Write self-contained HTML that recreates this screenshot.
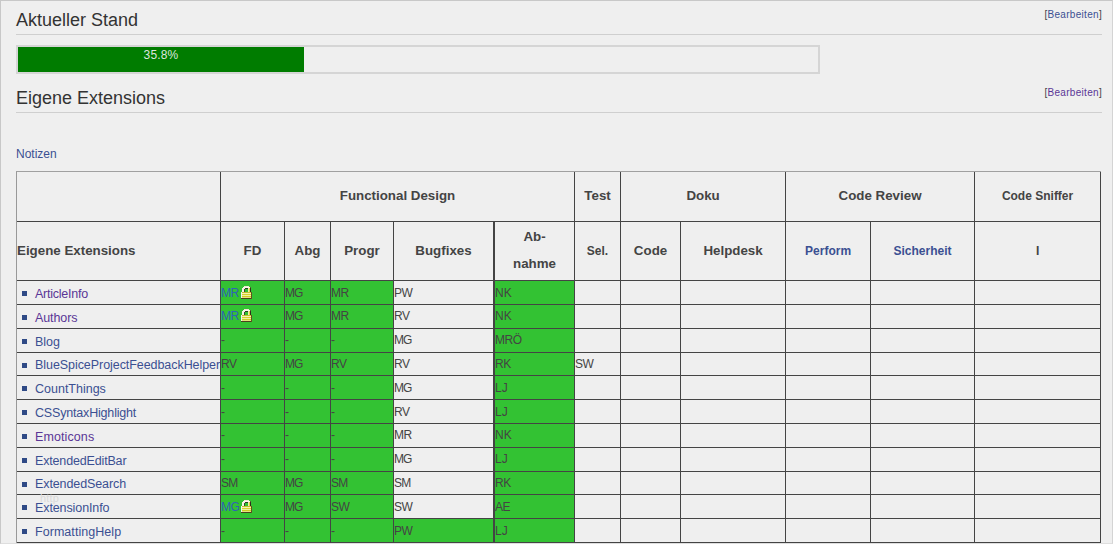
<!DOCTYPE html>
<html lang="de"><head><meta charset="utf-8"><title>Aktueller Stand</title>
<style>
html,body{margin:0;padding:0;}
body{width:1113px;height:544px;overflow:hidden;background:#efefef;font-family:"Liberation Sans",Arial,sans-serif;color:#444;position:relative;}
#frame{position:absolute;left:0;top:0;width:1111px;height:544px;border-left:1px solid #c8c8c8;border-right:1px solid #d4d4d4;border-top:1px solid #c8c8c8;border-bottom:1px solid #dedede;box-sizing:content-box;height:542px;}
a{text-decoration:none;color:#3b4f92;}
a.v{color:#5a3696;}
a.ext{color:#2f62b8;}
h2{position:absolute;left:16px;margin:0;font-weight:normal;font-size:18px;line-height:22px;color:#333;width:1086px;border-bottom:1px solid #cfcfcf;height:25px;}
h2 .es{position:absolute;right:0;top:-1px;font-size:10px;letter-spacing:0.3px;line-height:14px;color:#444;}
#h1{top:9px;}
#h2{top:87px;}
#prog{position:absolute;left:16px;top:45px;width:800px;height:25px;border:2px solid #d5d5d5;}
#prog div{width:286px;height:25px;background:#007c00;color:#dde4dd;font-size:12px;letter-spacing:0.15px;line-height:17px;text-align:center;}
#notizen{position:absolute;left:16px;top:146px;font-size:12px;line-height:16px;}
table{position:absolute;left:16px;top:171px;border-collapse:separate;border-spacing:0;table-layout:fixed;width:1085px;border-left:1px solid #999;border-top:1px solid #a0a0a0;font-size:12px;}
td,th{padding:0;border-right:1px solid #444;border-bottom:1px solid #444;box-sizing:border-box;overflow:hidden;white-space:nowrap;vertical-align:middle;text-align:left;font-weight:normal;}
th{font-weight:bold;font-size:13.33px;text-align:center;color:#444;padding-bottom:2px;}
tr.r2 th.s{padding-bottom:0;}
th.s{font-size:12px;}
th.l{text-align:left;}
th.ab{border-left:1px solid #444;line-height:27px;}
td.ab{border-left:1px solid #444;}
td.g{background:#33c233;}
td.n{font-size:12.5px;padding-top:2px;}
td.n span{display:inline-block;width:5px;height:5px;background:#2f4a86;margin:0 8px 1px 5px;vertical-align:middle;}
.lock{vertical-align:-2px;margin-left:2px;}
td{letter-spacing:-0.5px;}td.n{letter-spacing:0;}
tr.up td{padding-bottom:2px;}tr.up td.n{padding-bottom:0;}
#ghost{position:absolute;left:40px;top:492px;font-size:11px;line-height:13px;color:#dadada;letter-spacing:0.2px;}
</style></head><body><div id="frame"></div>
<h2 id="h1">Aktueller Stand<span class="es">[<a href="#">Bearbeiten</a>]</span></h2>
<div id="prog"><div>35.8%</div></div>
<h2 id="h2">Eigene Extensions<span class="es">[<a class="v" href="#">Bearbeiten</a>]</span></h2>
<div id="notizen"><a href="#">Notizen</a></div>
<table><colgroup>
<col style="width:204px">
<col style="width:64px">
<col style="width:46px">
<col style="width:63px">
<col style="width:100px">
<col style="width:81px">
<col style="width:46px">
<col style="width:60px">
<col style="width:105px">
<col style="width:85px">
<col style="width:104px">
<col style="width:126px">
</colgroup>
<tr style="height:50px"><th></th><th colspan="5">Functional Design</th><th>Test</th><th colspan="2">Doku</th><th colspan="2">Code Review</th><th class="s">Code Sniffer</th></tr>
<tr class="r2" style="height:59px"><th class="l">Eigene Extensions</th><th>FD</th><th>Abg</th><th>Progr</th><th>Bugfixes</th><th class="ab">Ab-<br>nahme</th><th class="s">Sel.</th><th>Code</th><th>Helpdesk</th><th class="s"><a href="#">Perform</a></th><th class="s"><a href="#">Sicherheit</a></th><th class="s">I</th></tr>
<tr style="height:24px"><td class="n"><span></span><a href="#" class=v style="letter-spacing:-0.24px">ArticleInfo</a></td><td class="g"><a class="ext" href="#">MR</a><svg class="lock" width="11" height="13" viewBox="0 0 11 13" shape-rendering="crispEdges"><rect x="3" y="0" width="5" height="1" fill="#efe8d2"/><rect x="2" y="1" width="7" height="1" fill="#faf6ea"/><rect x="9" y="1" width="1" height="1" fill="#5a5a34"/><rect x="1" y="2" width="3" height="1" fill="#f6f0e0"/><rect x="4" y="2" width="3" height="1" fill="#2c3a24"/><rect x="7" y="2" width="1" height="1" fill="#f0ecb0"/><rect x="8" y="2" width="1" height="1" fill="#e4dc48"/><rect x="9" y="2" width="1" height="1" fill="#34341c"/><rect x="1" y="3" width="2" height="1" fill="#f8f2e6"/><rect x="3" y="3" width="1" height="1" fill="#3a4428"/><rect x="7" y="3" width="1" height="1" fill="#f0ecb0"/><rect x="8" y="3" width="1" height="1" fill="#e0d840"/><rect x="9" y="3" width="1" height="1" fill="#2e2e1a"/><rect x="1" y="4" width="2" height="1" fill="#f8f2e6"/><rect x="3" y="4" width="1" height="1" fill="#3a4428"/><rect x="7" y="4" width="1" height="1" fill="#f0ecb0"/><rect x="8" y="4" width="1" height="1" fill="#e0d840"/><rect x="9" y="4" width="1" height="1" fill="#2e2e1a"/><rect x="1" y="5" width="2" height="1" fill="#f8f2e6"/><rect x="3" y="5" width="1" height="1" fill="#3a4428"/><rect x="7" y="5" width="1" height="1" fill="#f0ecb0"/><rect x="8" y="5" width="1" height="1" fill="#e0d840"/><rect x="9" y="5" width="1" height="1" fill="#2e2e1a"/><rect x="0" y="6" width="1" height="6" fill="#f4eef0"/><rect x="10" y="6" width="1" height="7" fill="#5c5420"/><rect x="1" y="6" width="9" height="1" fill="#c4bc30"/><rect x="1" y="7" width="9" height="1" fill="#f4f4ac"/><rect x="1" y="8" width="9" height="1" fill="#d6d22c"/><rect x="1" y="9" width="9" height="1" fill="#f0f0a0"/><rect x="1" y="10" width="9" height="1" fill="#d0cc24"/><rect x="1" y="11" width="9" height="1" fill="#e6e47c"/><rect x="0" y="12" width="10" height="1" fill="#4a421c"/></svg></td><td class="g" style="letter-spacing:-0.9px">MG</td><td class="g">MR</td><td>PW</td><td class="g ab" style="letter-spacing:0px">NK</td><td></td><td></td><td></td><td></td><td></td><td></td></tr>
<tr class="up" style="height:24px"><td class="n"><span></span><a href="#" class=v style="letter-spacing:-0.1px">Authors</a></td><td class="g"><a class="ext" href="#">MR</a><svg class="lock" width="11" height="13" viewBox="0 0 11 13" shape-rendering="crispEdges"><rect x="3" y="0" width="5" height="1" fill="#efe8d2"/><rect x="2" y="1" width="7" height="1" fill="#faf6ea"/><rect x="9" y="1" width="1" height="1" fill="#5a5a34"/><rect x="1" y="2" width="3" height="1" fill="#f6f0e0"/><rect x="4" y="2" width="3" height="1" fill="#2c3a24"/><rect x="7" y="2" width="1" height="1" fill="#f0ecb0"/><rect x="8" y="2" width="1" height="1" fill="#e4dc48"/><rect x="9" y="2" width="1" height="1" fill="#34341c"/><rect x="1" y="3" width="2" height="1" fill="#f8f2e6"/><rect x="3" y="3" width="1" height="1" fill="#3a4428"/><rect x="7" y="3" width="1" height="1" fill="#f0ecb0"/><rect x="8" y="3" width="1" height="1" fill="#e0d840"/><rect x="9" y="3" width="1" height="1" fill="#2e2e1a"/><rect x="1" y="4" width="2" height="1" fill="#f8f2e6"/><rect x="3" y="4" width="1" height="1" fill="#3a4428"/><rect x="7" y="4" width="1" height="1" fill="#f0ecb0"/><rect x="8" y="4" width="1" height="1" fill="#e0d840"/><rect x="9" y="4" width="1" height="1" fill="#2e2e1a"/><rect x="1" y="5" width="2" height="1" fill="#f8f2e6"/><rect x="3" y="5" width="1" height="1" fill="#3a4428"/><rect x="7" y="5" width="1" height="1" fill="#f0ecb0"/><rect x="8" y="5" width="1" height="1" fill="#e0d840"/><rect x="9" y="5" width="1" height="1" fill="#2e2e1a"/><rect x="0" y="6" width="1" height="6" fill="#f4eef0"/><rect x="10" y="6" width="1" height="7" fill="#5c5420"/><rect x="1" y="6" width="9" height="1" fill="#c4bc30"/><rect x="1" y="7" width="9" height="1" fill="#f4f4ac"/><rect x="1" y="8" width="9" height="1" fill="#d6d22c"/><rect x="1" y="9" width="9" height="1" fill="#f0f0a0"/><rect x="1" y="10" width="9" height="1" fill="#d0cc24"/><rect x="1" y="11" width="9" height="1" fill="#e6e47c"/><rect x="0" y="12" width="10" height="1" fill="#4a421c"/></svg></td><td class="g" style="letter-spacing:-0.9px">MG</td><td class="g">MR</td><td>RV</td><td class="g ab" style="letter-spacing:0px">NK</td><td></td><td></td><td></td><td></td><td></td><td></td></tr>
<tr class="up" style="height:24px"><td class="n"><span></span><a href="#">Blog</a></td><td class="g">-</td><td class="g">-</td><td class="g">-</td><td style="letter-spacing:-0.9px">MG</td><td class="g ab">MRÖ</td><td></td><td></td><td></td><td></td><td></td><td></td></tr>
<tr style="height:23px"><td class="n"><span></span><a href="#" style="letter-spacing:-0.06px">BlueSpiceProjectFeedbackHelper</a></td><td class="g">RV</td><td class="g" style="letter-spacing:-0.9px">MG</td><td class="g">RV</td><td>RV</td><td class="g ab">RK</td><td>SW</td><td></td><td></td><td></td><td></td><td></td></tr>
<tr style="height:24px"><td class="n"><span></span><a href="#">CountThings</a></td><td class="g">-</td><td class="g">-</td><td class="g">-</td><td style="letter-spacing:-0.9px">MG</td><td class="g ab" style="letter-spacing:0px">LJ</td><td></td><td></td><td></td><td></td><td></td><td></td></tr>
<tr style="height:24px"><td class="n"><span></span><a href="#" style="letter-spacing:-0.18px">CSSyntaxHighlight</a></td><td class="g">-</td><td class="g">-</td><td class="g">-</td><td>RV</td><td class="g ab" style="letter-spacing:0px">LJ</td><td></td><td></td><td></td><td></td><td></td><td></td></tr>
<tr class="up" style="height:24px"><td class="n"><span></span><a href="#" class=v style="letter-spacing:0.1px">Emoticons</a></td><td class="g">-</td><td class="g">-</td><td class="g">-</td><td>MR</td><td class="g ab" style="letter-spacing:0px">NK</td><td></td><td></td><td></td><td></td><td></td><td></td></tr>
<tr class="up" style="height:24px"><td class="n"><span></span><a href="#" style="letter-spacing:-0.16px">ExtendedEditBar</a></td><td class="g">-</td><td class="g">-</td><td class="g">-</td><td style="letter-spacing:-0.9px">MG</td><td class="g ab" style="letter-spacing:0px">LJ</td><td></td><td></td><td></td><td></td><td></td><td></td></tr>
<tr style="height:23px"><td class="n"><span></span><a href="#" style="letter-spacing:-0.1px">ExtendedSearch</a></td><td class="g" style="letter-spacing:-0.8px">SM</td><td class="g" style="letter-spacing:-0.9px">MG</td><td class="g" style="letter-spacing:-0.8px">SM</td><td style="letter-spacing:-0.8px">SM</td><td class="g ab">RK</td><td></td><td></td><td></td><td></td><td></td><td></td></tr>
<tr style="height:24px"><td class="n"><span></span><a href="#" style="letter-spacing:-0.1px">ExtensionInfo</a></td><td class="g"><a class="ext" href="#">MG</a><svg class="lock" width="11" height="13" viewBox="0 0 11 13" shape-rendering="crispEdges"><rect x="3" y="0" width="5" height="1" fill="#efe8d2"/><rect x="2" y="1" width="7" height="1" fill="#faf6ea"/><rect x="9" y="1" width="1" height="1" fill="#5a5a34"/><rect x="1" y="2" width="3" height="1" fill="#f6f0e0"/><rect x="4" y="2" width="3" height="1" fill="#2c3a24"/><rect x="7" y="2" width="1" height="1" fill="#f0ecb0"/><rect x="8" y="2" width="1" height="1" fill="#e4dc48"/><rect x="9" y="2" width="1" height="1" fill="#34341c"/><rect x="1" y="3" width="2" height="1" fill="#f8f2e6"/><rect x="3" y="3" width="1" height="1" fill="#3a4428"/><rect x="7" y="3" width="1" height="1" fill="#f0ecb0"/><rect x="8" y="3" width="1" height="1" fill="#e0d840"/><rect x="9" y="3" width="1" height="1" fill="#2e2e1a"/><rect x="1" y="4" width="2" height="1" fill="#f8f2e6"/><rect x="3" y="4" width="1" height="1" fill="#3a4428"/><rect x="7" y="4" width="1" height="1" fill="#f0ecb0"/><rect x="8" y="4" width="1" height="1" fill="#e0d840"/><rect x="9" y="4" width="1" height="1" fill="#2e2e1a"/><rect x="1" y="5" width="2" height="1" fill="#f8f2e6"/><rect x="3" y="5" width="1" height="1" fill="#3a4428"/><rect x="7" y="5" width="1" height="1" fill="#f0ecb0"/><rect x="8" y="5" width="1" height="1" fill="#e0d840"/><rect x="9" y="5" width="1" height="1" fill="#2e2e1a"/><rect x="0" y="6" width="1" height="6" fill="#f4eef0"/><rect x="10" y="6" width="1" height="7" fill="#5c5420"/><rect x="1" y="6" width="9" height="1" fill="#c4bc30"/><rect x="1" y="7" width="9" height="1" fill="#f4f4ac"/><rect x="1" y="8" width="9" height="1" fill="#d6d22c"/><rect x="1" y="9" width="9" height="1" fill="#f0f0a0"/><rect x="1" y="10" width="9" height="1" fill="#d0cc24"/><rect x="1" y="11" width="9" height="1" fill="#e6e47c"/><rect x="0" y="12" width="10" height="1" fill="#4a421c"/></svg></td><td class="g" style="letter-spacing:-0.9px">MG</td><td class="g">SW</td><td>SW</td><td class="g ab">AE</td><td></td><td></td><td></td><td></td><td></td><td></td></tr>
<tr style="height:24px"><td class="n"><span></span><a href="#" style="letter-spacing:0.05px">FormattingHelp</a></td><td class="g">-</td><td class="g">-</td><td class="g">-</td><td class="g">PW</td><td class="g ab" style="letter-spacing:0px">LJ</td><td></td><td></td><td></td><td></td><td></td><td></td></tr>
</table><span id="ghost">http</span></body></html>
